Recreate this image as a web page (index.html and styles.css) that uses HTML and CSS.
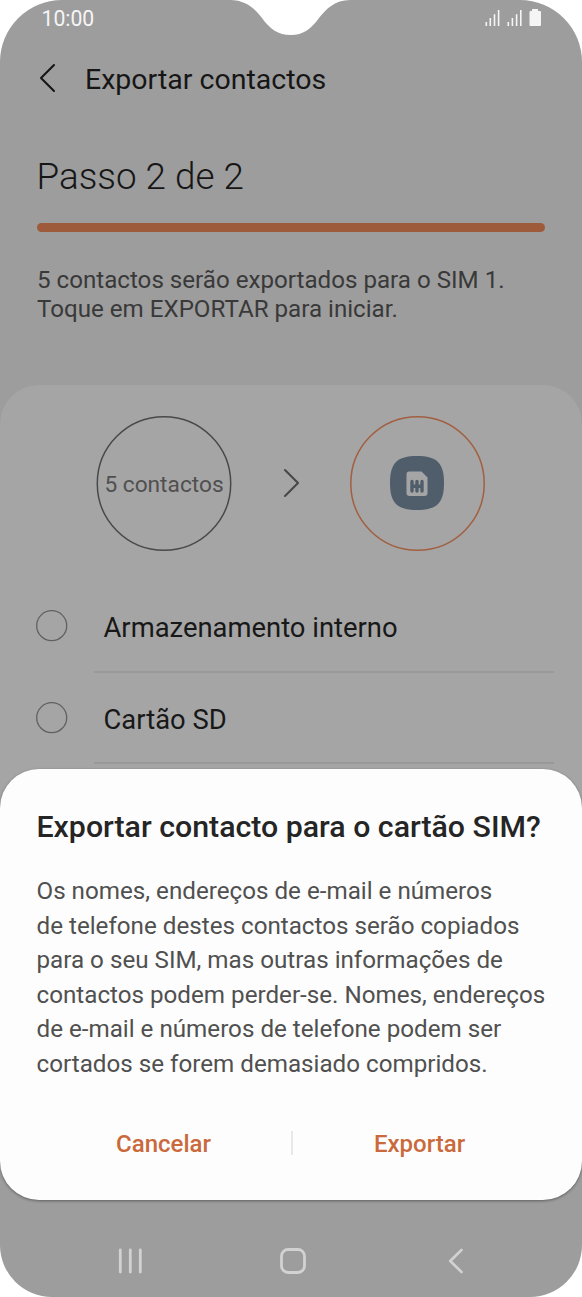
FILE: index.html
```html
<!DOCTYPE html>
<html lang="pt">
<head>
<meta charset="utf-8">
<title>Exportar contactos</title>
<link rel="stylesheet" href="styles.css">
</head>
<body>
<div class="phone">
  <svg class="notch" width="120" height="36" viewBox="0 0 120 36"><path d="M0 0C16 0 25 9 32 18C40 29 48 35 61 35C73 35 81 29 89 18C96 9 105 0 120 0Z" fill="#fff"/></svg>
  <header class="status">
    <span class="time">10:00</span>
    <svg class="status-icons" width="58" height="20" viewBox="0 0 58 20" fill="#f5f5f5">
      <path d="M.5 14h1.600v4H.5zM4.500 10h1.600v8H4.500zM8.700 6.200h1.600V18H8.700zM12.800 2h1.600v16h-1.600zM22.500 14h1.600v4h-1.600zM26.600 10h1.600v8h-1.600zM30.800 6.200h1.600V18h-1.600zM35 2h1.600v16H35z"/>
      <path d="M47 1h6v2h2q1 0 1 1v13q0 1-1 1H45.500q-1 0-1-1V4q0-1 1-1H47z"/>
    </svg>
  </header>
  <nav class="titlebar">
    <svg width="18" height="30" viewBox="0 0 18 30"><path d="M16 2L3 15L16 28" fill="none" stroke="#161616" stroke-width="2.100" stroke-linecap="round" stroke-linejoin="round"/></svg>
    <h1>Exportar contactos</h1>
  </nav>
  <section class="step">
    <h2>Passo 2 de 2</h2>
    <div class="progress"></div>
    <p>5 contactos serão exportados para o SIM 1.<br>Toque em EXPORTAR para iniciar.</p>
  </section>
  <main class="panel">
    <div class="transfer">
      <div class="circle">
        <svg class="ring" width="136" height="136" viewBox="0 0 136 136"><circle cx="68" cy="67.500" r="66.700" fill="none" stroke="#494949" stroke-width="1.500"/></svg>
        <span>5 contactos</span>
      </div>
      <svg width="18" height="30" viewBox="0 0 18 30"><path d="M2 2L15 15L2 28" fill="none" stroke="#484848" stroke-width="2.100" stroke-linecap="round" stroke-linejoin="round"/></svg>
      <div class="circle">
        <svg class="ring" width="136" height="136" viewBox="0 0 136 136"><circle cx="68.500" cy="67.500" r="66.700" fill="none" stroke="#a25f40" stroke-width="1.500"/></svg>
        <svg class="sim" width="54" height="54" viewBox="0 0 54 54">
          <path d="M27 0C47 0 54 7 54 27S47 54 27 54S0 47 0 27S7 0 27 0Z" fill="#505e6c"/>
          <path d="M19 15.500h12.500L37.500 21.500V37q0 3-3 3H19.500q-3 0-3-3V18.500q0-3 2.500-3Z" fill="#a5a5a5"/>
          <path d="M22 25.500v9.500M27 25.500v9.500M32 25.500v9.500M22 30.300h10" stroke="#505e6c" stroke-width="3.400" stroke-linecap="round" fill="none"/>
        </svg>
      </div>
    </div>
    <div class="option">
      <svg width="32" height="32" viewBox="0 0 32 32"><circle cx="15.700" cy="15.700" r="15" fill="none" stroke="#606060" stroke-width="1.300"/></svg>
      <div class="label">Armazenamento interno</div>
    </div>
    <div class="option">
      <svg width="32" height="32" viewBox="0 0 32 32"><circle cx="15.700" cy="15.700" r="15" fill="none" stroke="#606060" stroke-width="1.300"/></svg>
      <div class="label">Cartão SD</div>
    </div>
  </main>
  <section class="dialog">
    <h2>Exportar contacto para o cartão SIM?</h2>
    <p>Os nomes, endereços de e-mail e números<br>de telefone destes contactos serão copiados<br>para o seu SIM, mas outras informações de<br>contactos podem perder-se. Nomes, endereços<br>de e-mail e números de telefone podem ser<br>cortados se forem demasiado compridos.</p>
    <div class="actions"><button>Cancelar</button><i></i><button>Exportar</button></div>
  </section>
  <footer class="navigation">
    <svg width="26" height="26" viewBox="0 0 26 26"><path d="M2.300 2v22M12.300 2v22M22.300 2v22" stroke="#d2d2d2" stroke-width="2.800" stroke-linecap="round"/></svg>
    <svg class="home" width="28" height="28" viewBox="0 0 28 28"><rect x="2.500" y="2.500" width="23" height="23" rx="6.500" fill="none" stroke="#d2d2d2" stroke-width="2.800"/></svg>
    <svg width="18" height="28" viewBox="0 0 18 28"><path d="M14.500 3L3.200 14L14.500 25" fill="none" stroke="#d2d2d2" stroke-width="2.600" stroke-linecap="round" stroke-linejoin="round"/></svg>
  </footer>
</div>
</body>
</html>
```
FILE: styles.css
```css
* { box-sizing: border-box; }
body { margin: 0; background: #fff; font-family: Roboto, sans-serif; }
h1, h2, p { margin: 0; font-weight: 400; white-space: nowrap; }
svg { display: block; flex: none; }
.phone { position: relative; width: 582px; height: 1297px; overflow: hidden; background: #9d9d9d; border-radius: 62px 62px 52px 52px; display: flex; flex-direction: column; }
.notch { position: absolute; left: 230px; top: 0; }
.status { height: 40px; padding: 8px 40px 0 41.500px; display: flex; justify-content: space-between; color: #f5f5f5; }
.time { font-size: 21.200px; line-height: 22px; }
.status-icons { margin-right: -1px; }
.titlebar { height: 80px; padding: 0 38px; display: flex; align-items: center; gap: 29px; color: #161616; }
.titlebar svg { margin-top: -4px; }
.titlebar h1 { font-size: 28.500px; line-height: 34px; }
.step { height: 265px; padding: 34px 37px 0 37px; }
.step h2 { font-size: 36.800px; line-height: 46px; font-weight: 300; color: #161616; margin-left: -.5px; }
.progress { height: 9px; margin-top: 23px; border-radius: 5px; background: #9d5b3c; }
.step p { margin-top: 34px; font-size: 24.150px; line-height: 29px; color: #393939; }
.panel { height: 500px; border-radius: 39px 39px 0 0; background: #a5a5a5; padding-top: 31px; flex: none; }
.transfer { display: flex; align-items: center; justify-content: space-between; padding: 0 97px 0 96px; }
.transfer > svg { margin: -1px 0 0 2px; }
.circle { position: relative; width: 136px; height: 135px; display: flex; align-items: center; justify-content: center; color: #505050; font-size: 22.700px; white-space: nowrap; }
.ring { position: absolute; left: 0; top: 0; }
.circle span { padding-top: 2px; }
.sim { margin-top: -1px; }
.option { height: 91.500px; padding: 0 28px 0 36px; display: flex; align-items: center; }
.transfer + .option { margin-top: 30px; }
.option svg { margin-top: -1px; }
.label { margin-left: 26px; padding-left: 9.500px; flex: 1; height: 91.500px; border-bottom: 2px solid #999; line-height: 95px; font-size: 27.400px; color: #181818; }
.dialog { position: absolute; left: 0; right: 0; top: 769px; height: 431px; border-radius: 39px; background: #fdfdfd; box-shadow: 0 1px 3px rgba(0,0,0,.4); padding: 40px 36.500px 0; color: #252525; }
.dialog h2 { font-size: 30.300px; line-height: 36px; font-weight: 500; }
.dialog p { margin-top: 29px; font-size: 24.200px; line-height: 34.500px; color: #505050; }
.actions { display: flex; align-items: center; justify-content: center; margin: 45px -1px 0 0; height: 36px; }
.actions i { width: 2px; height: 24px; background: #e8e8e8; margin-top: -2px; }
button { width: 254px; border: 0; background: none; padding: 0; font: 500 24px/36px Roboto, sans-serif; color: #ca693c; }
.navigation { position: absolute; left: 118px; right: 117px; bottom: 22px; height: 28px; display: flex; align-items: center; justify-content: space-between; }
.home { margin-right: 5px; }
```
